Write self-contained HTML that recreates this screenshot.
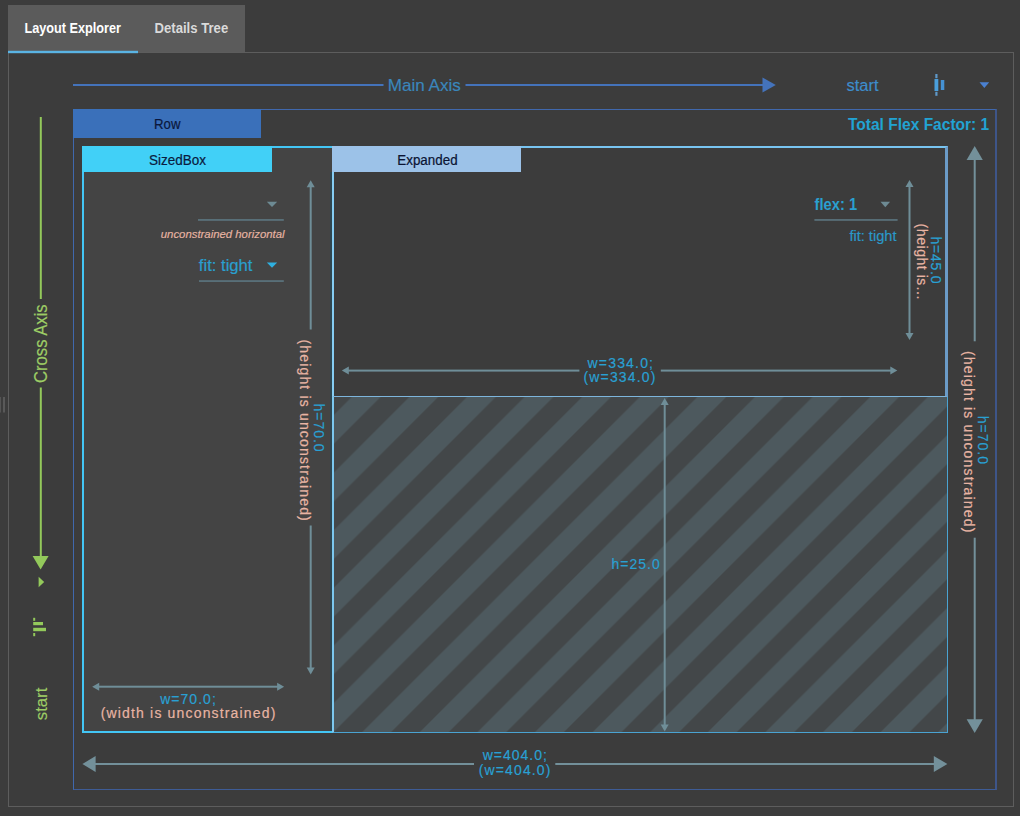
<!DOCTYPE html>
<html lang="en">
<head>
<meta charset="utf-8">
<title>Layout Explorer</title>
<style>
  html, body { margin: 0; padding: 0; }
  body {
    width: 1020px; height: 816px; overflow: hidden; position: relative;
    background: #3c3c3c;
    font-family: "Liberation Sans", sans-serif;
  }
  .abs { position: absolute; box-sizing: border-box; }
  .tabs { left: 8px; top: 5px; width: 237px; height: 48px; background: #5b5b5b; }
  .tab-underline { left: 8px; top: 50px; width: 130px; height: 3px; background: #5ab4e4; }
  .panel { left: 8px; top: 52px; width: 1006px; height: 755px; border: 1px solid #5d5d5d; }
  .row-box { left: 73px; top: 109px; width: 924px; height: 681px; border: 1px solid #4068ad; border-right: 2px solid #3e5589; border-bottom-color: #3e5c96; }
  .row-tab { left: 73px; top: 109px; width: 188px; height: 29px; background: #3a70ba; }
  .sized { left: 82px; top: 146px; width: 252px; height: 587px; background: #444444; border: 2px solid #43c6f5; }
  .sized-tab { left: 82px; top: 146px; width: 190px; height: 26px; background: #41d0f7; }
  .expanded { left: 332px; top: 146px; width: 616px; height: 251px; background: #3c3c3c; border: 2px solid #78c4f1; border-right: 3px solid #6b9bc7; border-bottom: 1px solid #7db5dc; border-left-color: #86cdf4; }
  .expanded-tab { left: 332px; top: 146px; width: 189px; height: 26px; background: #9cc2e8; }
  .empty {
    left: 332px; top: 396px; width: 616px; height: 337px;
    border: 1px solid #4aa3d2; border-left: 2px solid #7cc8f0; border-top: 1px solid #86b9dc;
    background-color: #434749;
  }
  svg { position: absolute; left: 0; top: 0; }
  text { font-family: "Liberation Sans", sans-serif; }
</style>
</head>
<body>
  <div class="abs tabs"></div>
  <div class="abs panel"></div>
  <div class="abs row-box"></div>
  <div class="abs row-tab"></div>
  <div class="abs sized"></div>
  <div class="abs sized-tab"></div>
  <div class="abs empty"></div>
  <div class="abs expanded"></div>
  <div class="abs expanded-tab"></div>

  <svg width="1020" height="816" viewBox="0 0 1020 816">
    <defs>
      <pattern id="stripes" patternUnits="userSpaceOnUse" width="57.6" height="57.6" x="0" y="0">
        <rect width="57.6" height="57.6" fill="#434749"/>
        <path d="M0 57.6 L57.6 0 L57.6 28.8 L28.8 57.6 Z M0 0 L28.8 0 L0 28.8 Z" fill="#4d595e"/>
      </pattern>
    </defs>
    <!-- empty space stripes -->
    <rect x="334" y="397" width="613" height="335" fill="url(#stripes)"/>

    <rect x="8" y="50.8" width="130" height="2.4" fill="#5ab4e4"/>
    <rect x="3" y="397" width="2" height="15.5" fill="#595959"/>
    <rect x="0" y="397" width="0.9" height="15.5" fill="#595959"/>
    <!-- tab labels -->
    <text x="24.5" y="33.2" font-size="14" font-weight="bold" fill="#ffffff" textLength="96.5" lengthAdjust="spacingAndGlyphs">Layout Explorer</text>
    <text x="154.5" y="33.2" font-size="14" font-weight="bold" fill="#dadada" textLength="73.7" lengthAdjust="spacingAndGlyphs">Details Tree</text>

    <!-- main axis -->
    <g fill="#4473bb" stroke="none">
      <rect x="73" y="84" width="310.5" height="2"/>
      <rect x="465.5" y="84" width="298" height="2"/>
      <polygon points="762.5,77.5 775.8,85 762.5,92.5"/>
    </g>
    <text x="387.8" y="91.1" font-size="17" fill="#3a86bb" stroke="#3a86bb" stroke-width="0.18" textLength="73" lengthAdjust="spacingAndGlyphs">Main Axis</text>
    <text x="846.5" y="91.2" font-size="16" fill="#3d8dcc" stroke="#3d8dcc" stroke-width="0.15" textLength="32" lengthAdjust="spacingAndGlyphs">start</text>
    <!-- main axis alignment icon -->
    <g>
      <rect x="935.3" y="74" width="2.2" height="4.2" fill="#5f98c8"/>
      <rect x="935.3" y="91.8" width="2.2" height="4" fill="#5f98c8"/>
      <rect x="934.5" y="79" width="3.8" height="12" fill="#4a9fdc"/>
      <rect x="940.8" y="80" width="3.5" height="10" fill="#4592d4"/>
    </g>
    <polygon points="979.5,82.3 989.2,82.3 984.35,87.9" fill="#4a80d0"/>

    <!-- cross axis -->
    <g fill="#93c95b" stroke="none">
      <rect x="39.8" y="117" width="2" height="182"/>
      <rect x="39.8" y="387.5" width="2" height="169"/>
      <polygon points="32.6,556 48.6,556 40.6,569.5"/>
      <polygon points="38.6,576.7 44.2,582 38.6,587.2"/>
      <!-- cross axis alignment icon -->
      <rect x="33.2" y="617.8" width="2" height="3"/>
      <rect x="33.2" y="633" width="2" height="3.2"/>
      <rect x="33.2" y="622" width="9.8" height="3.2"/>
      <rect x="33.2" y="627.8" width="12.8" height="3.4"/>
    </g>
    <text transform="translate(47.2 383) rotate(-90)" font-size="17.5" fill="#9ccc65" stroke="#9ccc65" stroke-width="0.18" textLength="78.7" lengthAdjust="spacingAndGlyphs">Cross Axis</text>
    <text transform="translate(47.2 720.2) rotate(-90)" font-size="16" fill="#9ccc65" stroke="#9ccc65" stroke-width="0.15" textLength="32.5" lengthAdjust="spacingAndGlyphs">start</text>

    <!-- row header -->
    <text x="154.1" y="129" font-size="14" fill="#0a173c" stroke="#0a173c" stroke-width="0.2" textLength="26.4" lengthAdjust="spacingAndGlyphs">Row</text>
    <text x="848" y="129.6" font-size="16" font-weight="bold" fill="#22a3d3" textLength="141.2" lengthAdjust="spacingAndGlyphs">Total Flex Factor: 1</text>

    <!-- child titles -->
    <text x="149" y="165.1" font-size="14" fill="#0a1b40" stroke="#0a1b40" stroke-width="0.2" textLength="57" lengthAdjust="spacingAndGlyphs">SizedBox</text>
    <text x="397.3" y="164.8" font-size="14" fill="#0b1433" stroke="#0b1433" stroke-width="0.2" textLength="60.3" lengthAdjust="spacingAndGlyphs">Expanded</text>

    <rect x="330.3" y="172" width="1.5" height="559" fill="#2a4754"/>
    <!-- SizedBox controls -->
    <polygon points="266.8,201.8 277.2,201.8 272,207" fill="#6d8a93"/>
    <rect x="198" y="219.2" width="85.8" height="1.5" fill="#5e7a85"/>
    <text x="160.8" y="238.1" font-size="11" font-style="italic" fill="#e8b4a3" stroke="#e8b4a3" stroke-width="0.15" textLength="123.7" lengthAdjust="spacingAndGlyphs">unconstrained horizontal</text>
    <text x="198.8" y="270.6" font-size="16" fill="#2a9fcf" stroke="#2a9fcf" stroke-width="0.18" textLength="53.7" lengthAdjust="spacingAndGlyphs">fit: tight</text>
    <polygon points="266.8,262.4 277.2,262.4 272,267.8" fill="#2fb0e0"/>
    <rect x="199" y="280.3" width="84.8" height="1.5" fill="#5e7a85"/>

    <!-- SizedBox height arrow -->
    <g fill="#6f8e98" stroke="none">
      <rect x="309.7" y="186" width="2" height="143.5"/>
      <rect x="309.7" y="525.5" width="2" height="143"/>
      <polygon points="306.7,187.2 314.7,187.2 310.7,180.2"/>
      <polygon points="306.7,667.6 314.7,667.6 310.7,674.6"/>
    </g>
    <text transform="translate(313.5 403.6) rotate(90)" font-size="14" fill="#29a0d3" stroke="#29a0d3" stroke-width="0.18" textLength="47.9" lengthAdjust="spacing">h=70.0</text>
    <text transform="translate(299.5 339.4) rotate(90)" font-size="14" fill="#e8b4a3" stroke="#e8b4a3" stroke-width="0.18" textLength="181.4" lengthAdjust="spacing">(height is unconstrained)</text>

    <!-- SizedBox width arrow -->
    <g fill="#6f8e98" stroke="none">
      <rect x="98" y="685.7" width="180" height="2"/>
      <polygon points="99.2,682.7 99.2,690.7 92.2,686.7"/>
      <polygon points="277.1,682.7 277.1,690.7 284.1,686.7"/>
    </g>
    <text x="160.2" y="703.7" font-size="14" fill="#29a0d3" stroke="#29a0d3" stroke-width="0.18" textLength="55.6" lengthAdjust="spacing">w=70.0;</text>
    <text x="100.7" y="717.7" font-size="14" fill="#e8b4a3" stroke="#e8b4a3" stroke-width="0.18" textLength="174.7" lengthAdjust="spacing">(width is unconstrained)</text>

    <!-- Expanded controls -->
    <text x="814.6" y="209.5" font-size="16" font-weight="bold" fill="#2aa0d0" textLength="42.6" lengthAdjust="spacingAndGlyphs">flex: 1</text>
    <polygon points="880.5,201.8 890.1,201.8 885.3,207.2" fill="#6d8a93"/>
    <rect x="814.4" y="219.2" width="83.2" height="1.5" fill="#5e7a85"/>
    <text x="849.4" y="241" font-size="14" fill="#2b98c9" stroke="#2b98c9" stroke-width="0.18" textLength="47.1" lengthAdjust="spacingAndGlyphs">fit: tight</text>

    <!-- Expanded height arrow -->
    <g fill="#6f8e98" stroke="none">
      <rect x="908.5" y="186" width="2" height="148"/>
      <polygon points="905.5,187 913.5,187 909.5,180"/>
      <polygon points="905.5,333 913.5,333 909.5,340"/>
    </g>
    <text transform="translate(931.2 236.4) rotate(90)" font-size="14" fill="#29a0d3" stroke="#29a0d3" stroke-width="0.18" textLength="47.2" lengthAdjust="spacing">h=45.0</text>
    <text transform="translate(917.2 223.6) rotate(90)" font-size="14" fill="#e8b4a3" stroke="#e8b4a3" stroke-width="0.18" textLength="76.3" lengthAdjust="spacing">(height is…</text>

    <!-- Expanded width arrow -->
    <g fill="#6f8e98" stroke="none">
      <rect x="347" y="369.6" width="232.4" height="2"/>
      <rect x="660.8" y="369.6" width="231" height="2"/>
      <polygon points="348.8,366.6 348.8,374.6 341.8,370.6"/>
      <polygon points="890.3,366.6 890.3,374.6 897.3,370.6"/>
    </g>
    <text x="587.5" y="367.5" font-size="14" fill="#29a0d3" stroke="#29a0d3" stroke-width="0.18" textLength="65.5" lengthAdjust="spacing">w=334.0;</text>
    <text x="583.5" y="381.8" font-size="14" fill="#29a0d3" stroke="#29a0d3" stroke-width="0.18" textLength="71.8" lengthAdjust="spacing">(w=334.0)</text>

    <!-- empty space height arrow -->
    <g fill="#6f8e98" stroke="none">
      <rect x="663.7" y="404" width="2" height="322"/>
      <polygon points="660.7,405 668.7,405 664.7,398"/>
      <polygon points="660.7,724.6 668.7,724.6 664.7,731.6"/>
    </g>
    <text x="611.4" y="568.6" font-size="14" fill="#29a0d3" stroke="#29a0d3" stroke-width="0.18" textLength="48.3" lengthAdjust="spacing">h=25.0</text>

    <!-- Row height arrow -->
    <g fill="#73909a" stroke="none">
      <rect x="973.7" y="159" width="2" height="182.3"/>
      <rect x="973.7" y="537.7" width="2" height="183"/>
      <polygon points="966.6,160 982.8,160 974.7,146"/>
      <polygon points="966.6,719.3 982.8,719.3 974.7,733"/>
    </g>
    <text transform="translate(977.7 415.8) rotate(90)" font-size="14" fill="#29a0d3" stroke="#29a0d3" stroke-width="0.18" textLength="48.2" lengthAdjust="spacing">h=70.0</text>
    <text transform="translate(963.7 351) rotate(90)" font-size="14" fill="#e8b4a3" stroke="#e8b4a3" stroke-width="0.18" textLength="181.3" lengthAdjust="spacing">(height is unconstrained)</text>

    <!-- Row width arrow -->
    <g fill="#73909a" stroke="none">
      <rect x="94" y="763" width="380" height="2"/>
      <rect x="555.3" y="763" width="380" height="2"/>
      <polygon points="95.6,756 95.6,772 82.4,764"/>
      <polygon points="933.8,756 933.8,772 947.4,764"/>
    </g>
    <text x="482.7" y="760.4" font-size="14" fill="#29a0d3" stroke="#29a0d3" stroke-width="0.18" textLength="64.2" lengthAdjust="spacing">w=404.0;</text>
    <text x="478.8" y="774.7" font-size="14" fill="#29a0d3" stroke="#29a0d3" stroke-width="0.18" textLength="71.6" lengthAdjust="spacing">(w=404.0)</text>
  </svg>
</body>
</html>
